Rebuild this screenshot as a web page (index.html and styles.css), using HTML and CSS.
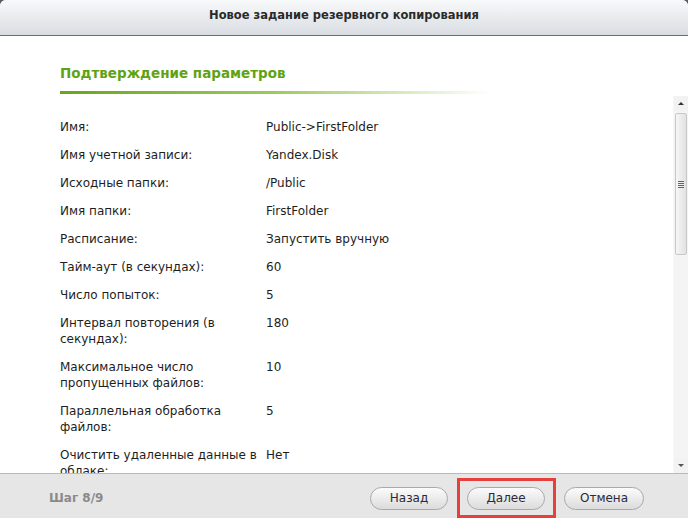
FILE: index.html
```html
<!DOCTYPE html>
<html lang="ru">
	<head>
		<meta charset="utf-8">
		<title>Новое задание резервного копирования</title>
		<link rel="stylesheet" href="styles.css">
	</head>
	<body>
		<div class="dialog">
			<div class="titlebar">Новое задание резервного копирования</div>
			<div class="content">
				<div class="header">
					<h2>Подтверждение параметров</h2>
					<div class="rule"></div>
				</div>
				<div class="scrollarea">
					<div class="summary">
						<div class="label">Имя:</div><div class="value">Public-&gt;FirstFolder</div>
						<div class="label">Имя учетной записи:</div><div class="value">Yandex.Disk</div>
						<div class="label">Исходные папки:</div><div class="value">/Public</div>
						<div class="label">Имя папки:</div><div class="value">FirstFolder</div>
						<div class="label">Расписание:</div><div class="value">Запустить вручную</div>
						<div class="label">Тайм-аут (в секундах):</div><div class="value">60</div>
						<div class="label">Число попыток:</div><div class="value">5</div>
						<div class="label">Интервал повторения (в секундах):</div><div class="value">180</div>
						<div class="label">Максимальное число пропущенных файлов:</div><div class="value">10</div>
						<div class="label">Параллельная обработка файлов:</div><div class="value">5</div>
						<div class="label">Очистить удаленные данные в облаке:</div><div class="value">Нет</div>
					</div>
					<div class="scrollbar">
						<div class="arrow up"></div>
						<div class="track">
							<div class="thumb"><span class="grip"></span></div>
						</div>
						<div class="arrow down"></div>
					</div>
				</div>
			</div>
			<div class="footer">
				<span class="step">Шаг 8/9</span>
				<div class="buttons">
					<button class="btn">Назад</button>
					<span class="marked">
						<button class="btn">Далее</button>
						<span class="highlight"></span>
					</span>
					<button class="btn wide">Отмена</button>
				</div>
			</div>
		</div>
	</body>
</html>
```

FILE: styles.css
```css
html {
	background: #5c5c5c;
}

body {
	margin: 0;
	font-family: "DejaVu Sans", sans-serif;
	font-size: 12px;
	color: #1e1e1e;
}

.dialog {
	width: 688px;
	height: 518px;
	display: flex;
	flex-direction: column;
	background: #fff;
	border-radius: 6px 6px 0 0;
	overflow: hidden;
}

.titlebar {
	height: 35px;
	line-height: 30px;
	text-align: center;
	font-weight: bold;
	font-size: 11.5px;
	color: #2a2a2a;
	background: linear-gradient(#f8f9fa, #d9dde2);
	border-bottom: 1px solid #6e6e6e;
	flex-shrink: 0;
}

.content {
	flex: 1;
	display: flex;
	flex-direction: column;
	min-height: 0;
}

.header {
	padding: 28px 0 0 60px;
	height: 32px;
	flex-shrink: 0;
}

.header h2 {
	margin: 0;
	font-size: 13.5px;
	line-height: 18px;
	color: #5fa312;
}

.rule {
	margin-top: 9px;
	width: 430px;
	height: 3px;
	background: linear-gradient(to right, #6aa51b, #9ccb5c 50%, rgba(220, 236, 200, 0));
}

.scrollarea {
	flex: 1;
	display: flex;
	min-height: 0;
}

.summary {
	flex: 1;
	padding: 23px 0 0 60px;
	display: grid;
	grid-template-columns: 206px 1fr;
	grid-auto-rows: min-content;
	row-gap: 12px;
	line-height: 16px;
	overflow: hidden;
}

.scrollbar {
	width: 14px;
	background: #f2f2f2;
	display: flex;
	flex-direction: column;
	border-left: 1px solid #f7f7f7;
}

.arrow {
	height: 15px;
	display: flex;
	align-items: center;
	justify-content: center;
}

.arrow::before {
	content: "";
	border-left: 3px solid transparent;
	border-right: 3px solid transparent;
}

.arrow.up::before {
	border-bottom: 3px solid #333;
}

.arrow.down::before {
	border-top: 3px solid #555;
}

.track {
	flex: 1;
	padding-top: 2px;
	background: #f4f4f4;
}

.thumb {
	height: 140px;
	margin: 0 1px;
	border: 1px solid #c8c8c8;
	border-radius: 2px;
	background: linear-gradient(to right, #f6f6f6, #e2e2e2);
	display: flex;
	align-items: center;
	justify-content: center;
}

.grip {
	width: 6px;
	height: 7px;
	background: repeating-linear-gradient(#666 0 1px, transparent 1px 2px);
}

.footer {
	height: 45px;
	flex-shrink: 0;
	box-sizing: border-box;
	border-top: 1px solid #b9b9b9;
	background: #e6e6e6;
	display: flex;
	align-items: center;
	justify-content: space-between;
	padding: 4px 44px 0 49px;
}

.step {
	font-weight: bold;
	font-size: 12px;
	color: #8a8a8a;
}

.buttons {
	display: flex;
	gap: 19px;
	align-items: center;
}

.btn {
	width: 78px;
	height: 23px;
	border: 1px solid #a9a9a9;
	border-radius: 12px;
	background: linear-gradient(#fbfbfb, #dcdcdc);
	font-family: "DejaVu Sans", sans-serif;
	font-size: 12px;
	color: #2a2a3a;
	padding: 0;
}

.btn.wide {
	width: 80px;
}

.marked {
	position: relative;
	display: flex;
}

.highlight {
	position: absolute;
	top: -9px;
	bottom: -8px;
	left: -10px;
	right: -11px;
	border: 3px solid #e5403b;
}
```
